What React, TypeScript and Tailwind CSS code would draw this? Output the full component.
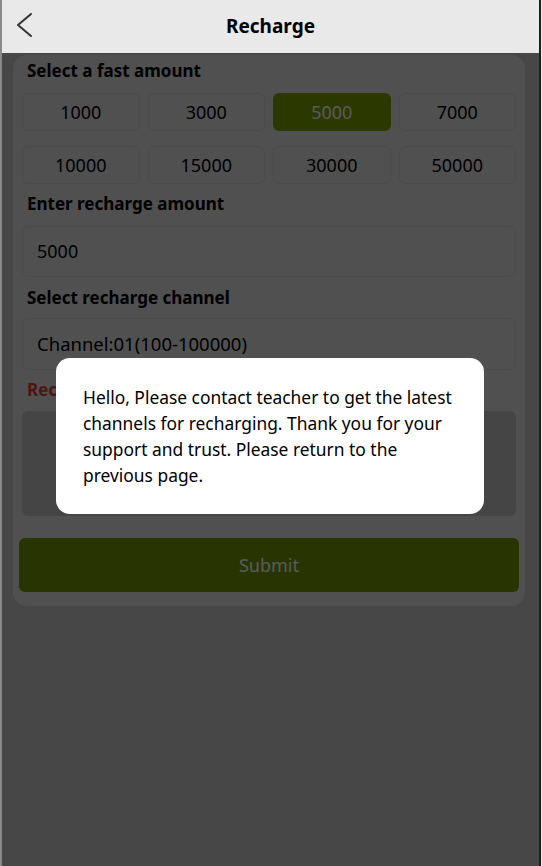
const fastAmounts = [1000, 3000, 5000, 7000, 10000, 15000, 30000, 50000];
const selected = 5000;

const font = { fontFamily: '"Noto Sans", "Open Sans", sans-serif' };

const BackIcon = () => (
  <svg className="absolute left-[13px] top-[12px]" width="20" height="26" viewBox="0 0 20 26" fill="none">
    <polyline points="16,2 3,13 16,24" stroke="#333" strokeWidth="2" strokeLinecap="round" strokeLinejoin="round" />
  </svg>
);

const Recharge = () => {
  return (
    <div className="flex min-h-[866px] w-full bg-[#efefef]" style={font}>
      <div className="w-[2px] shrink-0 bg-[#8a8a8a]" />
      <div className="relative flex min-w-0 flex-1 flex-col bg-[#cbcbcb]">
        <header className="relative z-20 flex h-[53px] items-center justify-center bg-[#e9e9e9]">
          <BackIcon />
          <h1 className="text-[19px] font-bold text-black">Recharge</h1>
        </header>

        <section className="ml-[11px] mr-[14px] mt-[2px] rounded-[14px] bg-[#e4e4e4] px-[9px] pb-[14px] pt-[5px]">
          <h3 className="ml-[5px] h-[22px] text-[17px] font-bold leading-[22px] text-black">Select a fast amount</h3>
          <div className="mt-[11px] grid grid-cols-4 gap-x-[8px] gap-y-[15px]">
            {fastAmounts.map((n) => (
              <div
                key={n}
                className={
                  n === selected
                    ? "flex h-[38px] items-center justify-center rounded-[6px] bg-[#7ca000] text-[18px] text-white"
                    : "flex h-[38px] items-center justify-center rounded-[6px] border border-[#d6d6d6] text-[18px] text-black"
                }
              >
                {n}
              </div>
            ))}
          </div>

          <h3 className="ml-[5px] mt-[9px] h-[22px] text-[17px] font-bold leading-[22px] text-black">Enter recharge amount</h3>
          <div className="mt-[11px] flex h-[51px] items-center rounded-[6px] border border-[#d6d6d6] px-[14px] text-[18px] text-black">
            5000
          </div>

          <h3 className="ml-[5px] mt-[10px] h-[22px] text-[17px] font-bold leading-[22px] text-black">Select recharge channel</h3>
          <div className="mt-[9px] flex h-[52px] items-center rounded-[6px] border border-[#d6d6d6] px-[14px] text-[18.5px] text-black">
            Channel:01(100-100000)
          </div>

          <h3 className="ml-[5px] mt-[9px] h-[22px] text-[17px] font-bold leading-[22px] text-[#df3a2e]">Recharge address</h3>
          <div className="mt-[10px] h-[105px] rounded-[6px] bg-[#c6c6c6]" />

          <button className="-mx-[3px] mt-[22px] flex h-[54px] w-[calc(100%+6px)] items-center justify-center rounded-[6px] bg-[#74990a] text-[18px] text-white">
            Submit
          </button>
        </section>

        <div className="absolute inset-x-0 bottom-0 top-[53px] z-10 bg-black/65" />
      </div>
      <div className="w-[2px] shrink-0 bg-[#1e1e1e]" />
      <div className="w-[1px] shrink-0 bg-[#efefef]" />

      <div className="fixed inset-0 z-30 flex items-center justify-center pl-[2px] pr-[4px] pt-[6px]">
        <div className="w-[428px] rounded-[14px] bg-white px-[27px] py-[26px] text-[17.4px] leading-[26px] text-black">
          Hello, Please contact teacher to get the latest channels for recharging. Thank you for your support and trust. Please return to the previous page.
        </div>
      </div>
    </div>
  );
};

export default function App() {
  return <Recharge />;
}
